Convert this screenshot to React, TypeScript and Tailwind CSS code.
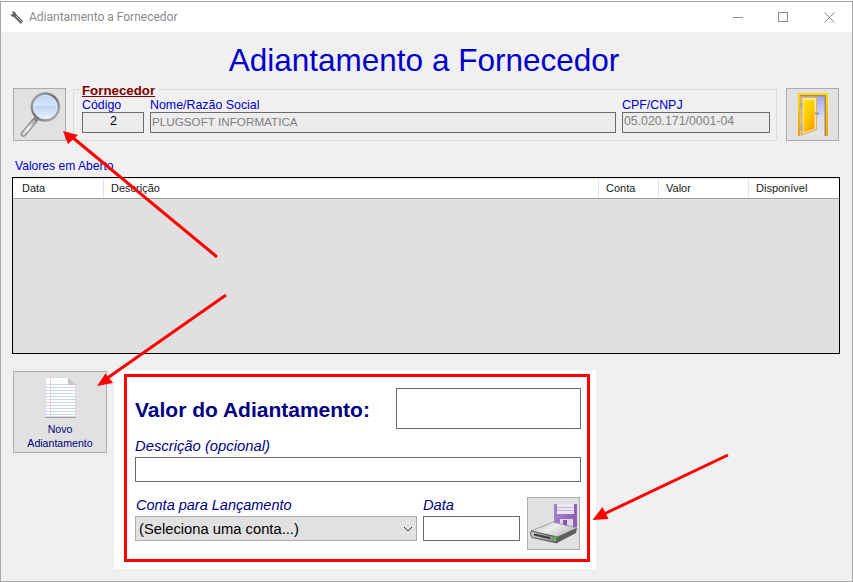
import React from "react";

const Magnifier = () => (
  <svg width="51" height="51" viewBox="0 0 51 51">
    <defs>
      <linearGradient id="gl" x1="0" y1="0" x2="0" y2="1">
        <stop offset="0" stopColor="#b5d0f4" />
        <stop offset="0.44" stopColor="#d6e6fb" />
        <stop offset="0.47" stopColor="#bcd3f2" />
        <stop offset="1" stopColor="#f0f6ff" />
      </linearGradient>
      <linearGradient id="rg" x1="0" y1="0" x2="1" y2="1">
        <stop offset="0" stopColor="#a8acb4" />
        <stop offset="0.5" stopColor="#70747c" />
        <stop offset="1" stopColor="#b4b8c0" />
      </linearGradient>
      <linearGradient id="hd" x1="0" y1="1" x2="1" y2="0">
        <stop offset="0" stopColor="#d4d4d4" />
        <stop offset="0.5" stopColor="#f6f6f6" />
        <stop offset="1" stopColor="#b0b0b0" />
      </linearGradient>
    </defs>
    <line x1="22" y1="30" x2="9.500" y2="45" stroke="#8a8a8a" strokeWidth="5.500" strokeLinecap="round" />
    <line x1="20" y1="32.500" x2="9.500" y2="45" stroke="url(#hd)" strokeWidth="3" strokeLinecap="round" />
    <circle cx="31.300" cy="18" r="13.400" fill="url(#gl)" stroke="url(#rg)" strokeWidth="2.600" />
    <circle cx="31.300" cy="18" r="11.800" fill="none" stroke="#eef1f6" strokeWidth="0.800" />
  </svg>
);

const Door = () => (
  <svg width="30" height="43" viewBox="0 0 30 43">
    <defs>
      <linearGradient id="sky" x1="0" y1="0" x2="0" y2="1">
        <stop offset="0" stopColor="#9ca4fc" />
        <stop offset="0.55" stopColor="#d8dcec" />
        <stop offset="1" stopColor="#e4e4e4" />
      </linearGradient>
      <linearGradient id="dr" x1="0" y1="0" x2="0.700" y2="1">
        <stop offset="0" stopColor="#ffe800" />
        <stop offset="0.6" stopColor="#ffc400" />
        <stop offset="1" stopColor="#ff9c00" />
      </linearGradient>
      <linearGradient id="fr" x1="0" y1="0" x2="0" y2="1">
        <stop offset="0" stopColor="#ffd800" />
        <stop offset="1" stopColor="#f09c10" />
      </linearGradient>
    </defs>
    <rect x="2" y="2" width="26" height="41" fill="url(#sky)" />
    <path d="M0 0H30V43H28V2H2V43H0Z" fill="url(#fr)" />
    <path d="M2 2H28V43H26.500V3.500H2Z" fill="#a98a52" />
    <path d="M2 3.500L19 3.500V37L2.500 43Z" fill="#d8ae78" />
    <path d="M4.500 5H18V36L4.500 41Z" fill="#ffeaa0" />
    <path d="M5.500 7H16.500V35.500L5.500 39.500Z" fill="url(#dr)" />
    <rect x="2.500" y="10" width="2" height="5" fill="#a8a8b0" />
    <rect x="2.500" y="32" width="2" height="5" fill="#a8a8b0" />
    <rect x="17" y="19.500" width="4" height="2" fill="#7f95b8" />
  </svg>
);

const Page = () => (
  <svg width="31" height="41" viewBox="0 0 31 41">
    <path d="M.5 .5H23L30.500 8V39.500H.5Z" fill="#fff" stroke="#dadada" />
    {[7, 10, 13, 16, 19, 22, 25, 28, 31, 34, 37].map((y) => (
      <line key={y} x1="1" x2="30" y1={y + 0.5} y2={y + 0.5} stroke="#c8d9ef" />
    ))}
    <line x1="5.500" x2="5.500" y1="1" y2="39" stroke="#eccfc8" />
    <path d="M23 .5V8H30.500Z" fill="#c6c6c6" />
    <line x1="0" x2="31" y1="40.500" y2="40.500" stroke="#a0a0a0" />
  </svg>
);

const Save = () => (
  <svg width="51" height="51" viewBox="0 0 51 51">
    <defs>
      <linearGradient id="dk" x1="0" y1="0" x2="1" y2="0.600">
        <stop offset="0" stopColor="#b4b4b4" />
        <stop offset="0.5" stopColor="#ececec" />
        <stop offset="1" stopColor="#bcbcbc" />
      </linearGradient>
      <linearGradient id="fc" x1="0" y1="0" x2="1" y2="0">
        <stop offset="0" stopColor="#c8c8c8" />
        <stop offset="1" stopColor="#7c7c7c" />
      </linearGradient>
      <linearGradient id="pp" x1="0" y1="0" x2="1" y2="0">
        <stop offset="0" stopColor="#a57fcb" />
        <stop offset="1" stopColor="#8a5fb4" />
      </linearGradient>
    </defs>
    <path d="M26 6H49V29H26Z" fill="url(#pp)" />
    <rect x="29" y="6" width="17" height="10" fill="#ece6f4" />
    <line x1="29" x2="46" y1="9.500" y2="9.500" stroke="#c8b6da" />
    <line x1="29" x2="46" y1="12.500" y2="12.500" stroke="#c8b6da" />
    <rect x="32" y="21" width="13" height="8" fill="#ded6e8" />
    <rect x="35" y="22" width="4" height="7" fill="#8456ae" />
    <path d="M3 33L25 24L49 30L29 39Z" fill="url(#dk)" stroke="#7a7a7a" strokeWidth="0.600" />
    <path d="M3 33L29 39V45L4 39.500L2.500 36Z" fill="url(#fc)" stroke="#444" strokeWidth="0.800" />
    <path d="M29 39L49 30L48 35L29 45Z" fill="#5e5e5e" />
    <path d="M6 35.500L22 39V41L6 37.500Z" fill="#3c3c3c" />
    <rect x="26" y="38.500" width="2" height="4" fill="#46d030" />
  </svg>
);

const AppIcon = () => (
  <svg width="15" height="15" viewBox="0 0 15 15">
    <path d="M3 1L6 2L7 4L14 11L12 14L5 7L3 6.500L1 4L3 4.500L4 3.500Z" fill="#5e5e5e" />
    <path d="M7 6L12.500 11.500" stroke="#d0d0d0" strokeWidth="1" />
  </svg>
);

const inputBox = "h-[21px] border border-[#6b6b6b] bg-[#ececec] leading-[17px] text-[#808080] pl-px whitespace-nowrap overflow-hidden";
const label = "text-[12.400px] leading-[14px] text-[#0000cd]";
const imgBtn = "flex items-center justify-center bg-[#e1e1e1] border border-[#adadad]";
const fieldBox = "border border-[#6b6b6b] bg-white";

export default function App() {
  return (
    <div
      className="relative w-[853px] h-[582px] overflow-hidden bg-white pt-px"
      style={{ fontFamily: '"Liberation Sans", Arial, sans-serif' }}
    >
      <div className="h-[581px] border border-[#a8a8a8] bg-[#f0f0f0] flex flex-col">
        {/* Title bar */}
        <div className="h-[30px] shrink-0 bg-white flex items-center pl-2 text-[#8a8a8a]">
          <AppIcon />
          <span className="ml-[5px] font-['Roboto',sans-serif] text-[12px]">Adiantamento a Fornecedor</span>
          <div className="ml-auto flex items-center pr-[17px]">
            <div className="w-[10px] h-px bg-[#8a8a8a] mr-[35px]" />
            <div className="w-[10px] h-[10px] border border-[#8a8a8a] mr-[36px]" />
            <svg width="11" height="11" viewBox="0 0 11 11">
              <path d="M.5 .5L10.500 10.500M10.500 .5L.5 10.500" stroke="#8a8a8a" />
            </svg>
          </div>
        </div>

        {/* Heading */}
        <h1 className="h-[56px] shrink-0 pt-[6px] pr-[5px] text-center text-[31.500px] leading-[44px] text-[#0000cd]">
          Adiantamento a Fornecedor
        </h1>

        {/* Supplier row */}
        <div className="flex items-start pl-3 shrink-0">
          <button className={`${imgBtn} w-[53px] h-[53px]`}>
            <Magnifier />
          </button>
          <div className="relative ml-[7px] mt-px w-[704px] h-[52px] border border-[#dcdcdc] pl-2 pt-2 flex gap-[6px]">
            <span className="absolute left-[7px] -top-[6px] bg-[#f0f0f0] pl-px pr-[4px] text-[13.300px] leading-[14px] font-bold underline text-[#800000]">
              Fornecedor
            </span>
            <div className="w-[62px]">
              <div className={label}>Código</div>
              <div className={`${inputBox} text-[12.500px] text-center !text-black`}>2</div>
            </div>
            <div className="w-[466px]">
              <div className={label}>Nome/Razão Social</div>
              <div className={`${inputBox} text-[11.700px]`}>PLUGSOFT INFORMATICA</div>
            </div>
            <div className="w-[148px]">
              <div className={label}>CPF/CNPJ</div>
              <div className={`${inputBox} text-[12.300px]`}>05.020.171/0001-04</div>
            </div>
          </div>
          <button className={`${imgBtn} ml-[9px] w-[53px] h-[53px]`}>
            <Door />
          </button>
        </div>

        {/* Open values */}
        <div className="shrink-0 mt-[18px] ml-[14px] h-[18px] text-[12.100px] leading-[14px] text-[#0000cd]">Valores em Aberto</div>
        <div className="shrink-0 ml-[11px] w-[828px] h-[177px] border border-black bg-[#e0e0e0]">
          <div className="flex h-[21px] bg-white border-b border-[#a0a0a0] border-t border-t-[#e8e8e8] text-[11px] leading-[18px] text-[#1a1a1a]">
            <div className="w-[91px] pl-[9px] border-r border-[#e4e4e4]">Data</div>
            <div className="w-[495px] pl-[7px] border-r border-[#e4e4e4]">Descrição</div>
            <div className="w-[60px] pl-[7px] border-r border-[#e4e4e4]">Conta</div>
            <div className="w-[90px] pl-[7px] border-r border-[#e4e4e4]">Valor</div>
            <div className="flex-1 pl-[7px]">Disponível</div>
          </div>
        </div>

        {/* Lower section */}
        <div className="flex items-start pl-3 mt-[17px]">
          <button className={`${imgBtn} w-[94px] h-[82px] flex-col justify-start pt-[5px]`}>
            <Page />
            <span className="mt-[4px] text-[10.600px] leading-[14px] text-[#000080]">Novo<br />Adiantamento</span>
          </button>
          <div className="ml-[7px] -mt-px w-[482px] h-[199px] bg-white pl-[10px] pt-[4px]">
            <div className="w-[466px] h-[188px] border-[3px] border-[#ff0000] pl-2 pr-[6px] pt-[11px] text-[#000080]">
              <div className="flex items-center justify-between h-[41px]">
                <span className="text-[21px] font-bold mt-[3px]">Valor do Adiantamento:</span>
                <div className={`${fieldBox} w-[185px] h-[41px]`} />
              </div>
              <div className="mt-[9px] italic text-[14.800px] leading-[16px] h-[19px]">Descrição (opcional)</div>
              <div className={`${fieldBox} w-[446px] h-[25px]`} />
              <div className="flex items-start mt-[15px]">
                <div className="w-[282px]">
                  <div className="italic text-[14.500px] leading-[16px] h-[19px] pl-px">Conta para Lançamento</div>
                  <div className="h-[25px] bg-[#e1e1e1] border border-[#adadad] flex items-center justify-between pl-[3px] pr-[3px] pt-px text-[14.750px] text-black">
                    <span>(Seleciona uma conta...)</span>
                    <svg width="10" height="6" viewBox="0 0 10 6"><path d="M1 1L5 5L9 1" fill="none" stroke="#333" /></svg>
                  </div>
                </div>
                <div className="ml-[6px] w-[97px]">
                  <div className="italic text-[14.700px] leading-[16px] h-[19px]">Data</div>
                  <div className={`${fieldBox} h-[25px]`} />
                </div>
                <button className={`${imgBtn} ml-[7px] w-[53px] h-[53px]`}>
                  <Save />
                </button>
              </div>
            </div>
          </div>
        </div>
      </div>

      {/* Annotation arrows */}
      <svg className="absolute inset-0 pointer-events-none" width="853" height="582" viewBox="0 0 853 582">
        <g fill="#ff0000" stroke="#ff0000" strokeWidth="3">
          <line x1="217" y1="257" x2="72" y2="137" />
          <line x1="226" y1="295" x2="106" y2="379" />
          <line x1="728" y1="455" x2="604" y2="514" />
        </g>
        <g fill="#ff0000">
          <path d="M63 131L78 135L68 144Z" />
          <path d="M97 386L105.500 373.500L113 383Z" />
          <path d="M592.500 520L602.500 507L608.500 519Z" />
        </g>
      </svg>
    </div>
  );
}
